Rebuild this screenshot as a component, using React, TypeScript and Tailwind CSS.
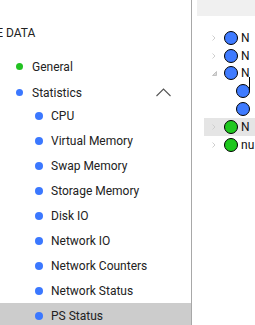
import React from "react";

const font = { fontFamily: 'Roboto, "Noto Sans", sans-serif' };

function SubItem({ label, selected }: { label: string; selected?: boolean }) {
  return (
    <div
      className={
        "h-[25px] shrink-0 flex items-center pl-[35px] " + (selected ? "bg-[#cccccc]" : "")
      }
    >
      <span className="w-[8px] h-[8px] rounded-full bg-[#3b78ff] shrink-0" />
      <span className="ml-[8px] text-[12px] leading-[16px] text-[#222] whitespace-nowrap">
        {label}
      </span>
    </div>
  );
}

function TreeRow({
  color,
  text,
  child,
  chevron,
  highlight,
}: {
  color: "blue" | "green";
  text?: string;
  child?: boolean;
  chevron?: "right" | "down";
  highlight?: boolean;
}) {
  return (
    <div
      className={
        "h-[17.8px] shrink-0 ml-[12px] flex items-center whitespace-nowrap " +
        (highlight ? "bg-[#e5e5e5]" : "")
      }
    >
      <div className={child ? "w-[32px] shrink-0" : "w-[20px] shrink-0 flex items-center pl-[8px]"}>
        {!child && chevron === "right" && (
          <svg width="4" height="6" viewBox="0 0 4 6">
            <path d="M0.5 0.5 L3 3 L0.5 5.5" fill="none" stroke="#cfcfcf" strokeWidth="1" />
          </svg>
        )}
        {!child && chevron === "down" && (
          <svg width="5" height="5" viewBox="0 0 5 5">
            <path d="M4.5 0.5 L4.5 4.5 L0.5 4.5 Z" fill="#d8d8d8" stroke="#b8b8b8" strokeWidth="0.8" />
          </svg>
        )}
      </div>
      <span
        className={
          "w-[14px] h-[14px] rounded-full border border-black shrink-0 " +
          (color === "blue" ? "bg-[#3f7bff]" : "bg-[#1ec81e]")
        }
      />
      {text && (
        <span className="ml-[3px] text-[12px] leading-[16px] text-[#111]">{text}</span>
      )}
    </div>
  );
}

export default function App() {
  return (
    <div className="w-[255px] h-[325px] overflow-hidden bg-white flex relative" style={font}>
      <div className="w-[192px] shrink-0 h-full border-r border-[#a8a8a8] flex flex-col overflow-hidden">
        <div className="pt-[25px] h-[41px] shrink-0 flex items-start text-[12px] leading-[16px] text-[#222]">
          <div className="w-[3px] overflow-hidden flex justify-end shrink-0">
            <span className="shrink-0 whitespace-nowrap">SOURCE</span>
          </div>
          <span className="ml-[3px] whitespace-nowrap">DATA</span>
        </div>
        <div className="mt-[13px] h-[25px] shrink-0 flex items-center pl-[16px]">
          <span className="w-[7px] h-[7px] rounded-full bg-[#22c222] shrink-0" />
          <span className="ml-[9px] text-[12px] leading-[16px] text-[#222]">General</span>
        </div>
        <div className="h-[24px] shrink-0 pt-[3px] flex items-center pl-[16px]">
          <span className="w-[7px] h-[7px] rounded-full bg-[#3b78ff] shrink-0" />
          <span className="ml-[9px] text-[12px] leading-[16px] text-[#222]">Statistics</span>
          <svg className="ml-auto mr-[20px]" width="15" height="9" viewBox="0 0 15 9">
            <path d="M0.5 8 L7.5 1 L14.5 8" fill="none" stroke="#555" strokeWidth="1.1" />
          </svg>
        </div>
        <SubItem label="CPU" />
        <SubItem label="Virtual Memory" />
        <SubItem label="Swap Memory" />
        <SubItem label="Storage Memory" />
        <SubItem label="Disk IO" />
        <SubItem label="Network IO" />
        <SubItem label="Network Counters" />
        <SubItem label="Network Status" />
        <SubItem label="PS Status" selected />
      </div>
      <div className="flex-1 flex flex-col min-w-0">
        <div className="ml-[5px] h-[16px] shrink-0 bg-[#f0f0f0]" />
        <div className="mt-[13px] flex flex-col">
          <TreeRow color="blue" text="N" chevron="right" />
          <TreeRow color="blue" text="N" chevron="right" />
          <TreeRow color="blue" text="N" chevron="down" />
          <TreeRow color="blue" child />
          <TreeRow color="blue" child />
          <TreeRow color="green" text="N" chevron="right" highlight />
          <TreeRow color="green" text="nu" chevron="right" />
        </div>
      </div>
      <div className="absolute left-[249px] top-[77px] w-[1px] h-[13px] bg-black" />
    </div>
  );
}
